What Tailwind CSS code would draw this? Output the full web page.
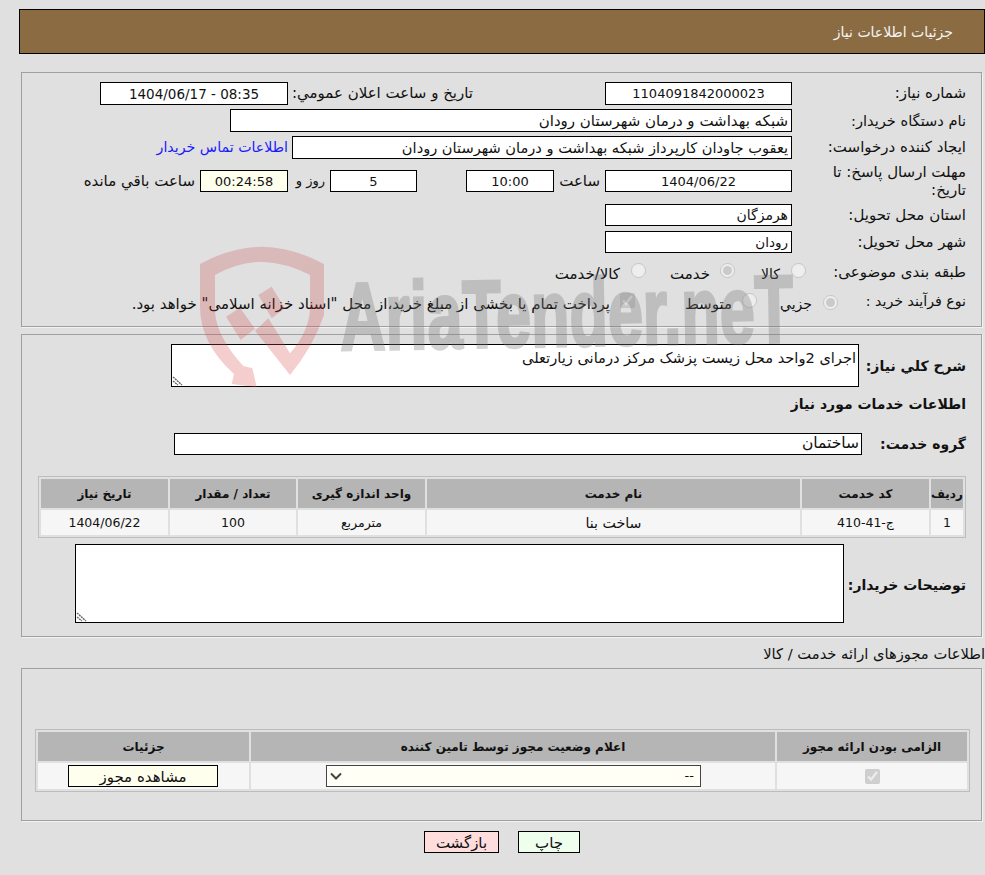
<!DOCTYPE html>
<html lang="fa" dir="rtl">
<head>
  <meta charset="UTF-8" />
  <title>جزئیات اطلاعات نیاز</title>
  <script src="https://cdn.jsdelivr.net/npm/@tailwindcss/browser@4"></script>
</head>
<body class="relative bg-[#e0e0e0] h-[875px] overflow-hidden text-[15px] text-[#111] font-['DejaVu_Sans',sans-serif]">

  <!-- Title bar -->
  <div class="pt-[9px]">
    <div class="w-[966px] h-[45px] flex items-center bg-[#8b6b42] border border-black pr-[31px] pt-[1px] text-[#f4f4f4] text-[14px]">جزئیات اطلاعات نیاز</div>
  </div>

  <!-- Main info -->
  <section class="mt-[18px] mr-[3px] w-[961px] h-[255px] border border-[#a0a0a0] shadow-[1px_1px_0_#f2f2f2] pt-[9px]">
    <div class="flex items-center h-[23px]">
      <label class="w-[189px] pr-[15px] shrink-0">شماره نياز:</label>
      <input readonly value="1104091842000023" class="w-[187px] h-[23px] bg-white border border-black text-center text-[13px]" />
      <label class="mr-[132px] w-[185px] shrink-0 whitespace-nowrap">تاریخ و ساعت اعلان عمومي:</label>
      <input readonly value="1404/06/17 - 08:35" class="w-[188px] h-[23px] bg-white border border-black text-center text-[13.5px]" dir="ltr" />
    </div>
    <div class="flex items-center h-[23px] mt-[4px]">
      <label class="w-[189px] pr-[15px] shrink-0 text-[14.6px]">نام دستگاه خریدار:</label>
      <input readonly value="شبکه بهداشت و درمان شهرستان رودان" class="w-[562px] h-[23px] bg-white border border-black px-[3px]" />
    </div>
    <div class="flex items-center h-[23px] mt-[4px]">
      <label class="w-[189px] pr-[15px] shrink-0">ایجاد کننده درخواست:</label>
      <input readonly value="یعقوب جاودان کارپرداز شبکه بهداشت و درمان شهرستان رودان" class="w-[500px] h-[23px] bg-white border border-black px-[3px] text-[14.6px]" />
      <a href="#" class="mr-[4px] text-[#1a1aff] text-[14.2px]">اطلاعات تماس خریدار</a>
    </div>
    <div class="flex items-center h-[22px] mt-[11px]">
      <label class="w-[189px] pr-[15px] shrink-0 leading-[18px]">مهلت ارسال پاسخ: تا<br />تاریخ:</label>
      <input readonly value="1404/06/22" class="w-[187px] h-[22px] bg-white border border-black text-center text-[13px]" />
      <span class="w-[51px] pr-[5px] shrink-0">ساعت</span>
      <input readonly value="10:00" class="w-[88px] h-[22px] bg-white border border-black text-center text-[13px]" />
      <input readonly value="5" class="mr-[49px] w-[87px] h-[22px] bg-white border border-black text-center text-[13px]" />
      <span class="w-[42px] pr-[5px] shrink-0 text-[13px]">روز و</span>
      <input readonly value="00:24:58" class="w-[88px] h-[22px] bg-[#ffffee] border border-black text-center text-[13px]" />
      <span class="pr-[5px] shrink-0">ساعت باقي مانده</span>
    </div>
    <div class="flex items-center h-[22px] mt-[12px]">
      <label class="w-[189px] pr-[15px] shrink-0">استان محل تحویل:</label>
      <input readonly value="هرمزگان" class="w-[187px] h-[22px] bg-white border border-black px-[3px] text-[14px]" />
    </div>
    <div class="flex items-center h-[22px] mt-[5px]">
      <label class="w-[189px] pr-[15px] shrink-0">شهر محل تحویل:</label>
      <input readonly value="رودان" class="w-[187px] h-[22px] bg-white border border-black px-[3px] text-[13.5px]" />
    </div>
    <div class="flex items-center h-[24px] mt-[7px]">
      <label class="w-[175px] pr-[15px] shrink-0">طبقه بندی موضوعی:</label>
      <input type="radio" disabled class="w-[15px] h-[15px] m-0 shrink-0 -mt-[3px]" />
      <span class="w-[56px] pr-[11px] mt-[5px] shrink-0 text-[14px]">کالا</span>
      <input type="radio" disabled checked class="w-[15px] h-[15px] m-0 shrink-0 -mt-[3px]" />
      <span class="w-[74px] pr-[10px] mt-[5px] shrink-0">خدمت</span>
      <input type="radio" disabled class="w-[15px] h-[15px] m-0 shrink-0 -mt-[3px]" />
      <span class="pr-[11px] mt-[5px] shrink-0">کالا/خدمت</span>
    </div>
    <div class="flex items-center h-[24px] mt-[6px]">
      <label class="w-[143px] pr-[15px] shrink-0 text-[14.2px]">نوع فرآیند خرید :</label>
      <input type="radio" disabled checked class="w-[15px] h-[15px] m-0 shrink-0" />
      <span class="w-[66px] pr-[11px] mt-[4px] shrink-0 text-[14px]">جزيي</span>
      <input type="radio" disabled class="w-[15px] h-[15px] m-0 shrink-0 -mt-[3px]" />
      <span class="w-[107px] pr-[10px] mt-[4px] shrink-0">متوسط</span>
      <input type="checkbox" disabled checked class="w-[15px] h-[15px] m-0 shrink-0 -mt-[3px]" />
      <span class="pr-[10px] mt-[4px] shrink-0">پرداخت تمام یا بخشی از مبلغ خرید،از محل "اسناد خزانه اسلامی" خواهد بود.</span>
    </div>
  </section>

  <!-- Description and services -->
  <section class="mt-[7px] mr-[3px] w-[961px] h-[303px] border border-[#a0a0a0] shadow-[1px_1px_0_#f2f2f2] pt-[9px] text-[14px]">
    <div class="flex items-center h-[43px]">
      <label class="w-[122px] pr-[15px] pt-[2px] shrink-0 font-bold">شرح كلي نياز:</label>
      <div class="relative w-[688px] h-[43px]">
        <textarea readonly class="block w-full h-full bg-white border border-black px-[2px] pt-[3px] leading-[20px] text-[14.6px] resize-none">اجرای 2واحد محل زیست پزشک مرکز درمانی زیارتعلی</textarea>
        <svg class="absolute left-[1px] bottom-[1px]" width="11" height="11" viewBox="0 0 11 11" fill="none" stroke="#666" stroke-width="1.4" stroke-dasharray="2 .7"><path d="M1 2 L10 10 M1 6 L6 10" /></svg>
      </div>
    </div>
    <div class="h-[22px] mt-[6px] pr-[15px] font-bold leading-[22px]">اطلاعات خدمات مورد نياز</div>
    <div class="flex items-center h-[22px] mt-[18px]">
      <label class="w-[119px] pr-[15px] shrink-0 font-bold">گروه خدمت:</label>
      <input readonly value="ساختمان" class="w-[688px] h-[22px] bg-white border border-black px-[2px] text-[15.5px]" />
    </div>
    <table class="table-fixed mt-[21px] mr-[15px] w-[928px] border border-[#bdbdbd] border-separate border-spacing-[2px] text-center text-[12.5px]">
      <thead>
        <tr class="h-[29px] bg-[#b5b5b5] text-[12px]">
          <th class="w-[32px] font-bold">ردیف</th>
          <th class="w-[127px] font-bold">کد خدمت</th>
          <th class="w-[373px] font-bold">نام خدمت</th>
          <th class="w-[127px] font-bold">واحد اندازه گیری</th>
          <th class="w-[126px] font-bold">تعداد / مقدار</th>
          <th class="font-bold">تاریخ نیاز</th>
        </tr>
      </thead>
      <tbody>
        <tr class="h-[25px] bg-[#f6f6f6]">
          <td class="pt-[2px]">1</td>
          <td class="pt-[2px]">ج-41-410</td>
          <td class="pt-[2px] text-[14.2px]">ساخت بنا</td>
          <td class="pt-[2px]">مترمربع</td>
          <td class="pt-[2px]">100</td>
          <td class="pt-[2px]">1404/06/22</td>
        </tr>
      </tbody>
    </table>
    <div class="flex items-center h-[79px] mt-[6px]">
      <label class="w-[137px] pr-[15px] pt-[3px] shrink-0 font-bold">توضیحات خریدار:</label>
      <div class="relative w-[769px] h-[79px]">
        <textarea readonly class="block w-full h-full bg-white border border-black resize-none"></textarea>
        <svg class="absolute left-[1px] bottom-[1px]" width="11" height="11" viewBox="0 0 11 11" fill="none" stroke="#666" stroke-width="1.4" stroke-dasharray="2 .7"><path d="M1 2 L10 10 M1 6 L6 10" /></svg>
      </div>
    </div>
  </section>

  <div class="h-[31px] leading-[34px] text-[14.7px]">اطلاعات مجوزهای ارائه خدمت / کالا</div>

  <!-- Licences -->
  <section class="mr-[3px] w-[961px] h-[153px] border border-[#a0a0a0] shadow-[1px_1px_0_#f2f2f2] pt-[60px]">
    <table class="table-fixed mr-[11px] w-[935px] border border-[#bdbdbd] border-separate border-spacing-[2px] text-center text-[12.5px]">
      <thead>
        <tr class="h-[29px] bg-[#b5b5b5] text-[12px]">
          <th class="w-[190px] font-bold">الزامی بودن ارائه مجوز</th>
          <th class="w-[524px] font-bold">اعلام وضعیت مجوز توسط تامین کننده</th>
          <th class="font-bold">جزئیات</th>
        </tr>
      </thead>
      <tbody>
        <tr class="h-[26px] bg-[#f6f6f6]">
          <td class="align-middle"><input type="checkbox" disabled checked class="w-[15px] h-[15px] m-0 align-middle" /></td>
          <td>
            <div class="relative mr-[74px] w-[375px] h-[22px]">
              <select class="block w-full h-full appearance-none bg-[#fffff5] border border-[#444] text-[13px] pr-[6px]"><option>--</option></select>
              <svg class="absolute left-[4px] top-[7px]" width="12" height="8" viewBox="0 0 12 8" fill="none" stroke="#444" stroke-width="2"><path d="M1 1.5 L6 6.5 L11 1.5" /></svg>
            </div>
          </td>
          <td>
            <button class="mr-[31px] block w-[150px] h-[22px] bg-[#ffffee] border border-black text-[15px]">مشاهده مجوز</button>
          </td>
        </tr>
      </tbody>
    </table>
  </section>

  <div class="flex gap-[19px] mt-[10px] mr-[405px]">
    <button class="w-[62px] h-[22px] bg-[#eeffee] border border-black text-[15px]">چاپ</button>
    <button class="w-[75px] h-[22px] bg-[#ffdddd] border border-black text-[15px]">بازگشت</button>
  </div>

  <!-- Watermark -->
  <svg class="absolute left-[190px] top-[240px] pointer-events-none" width="300" height="147" viewBox="0 0 900 441" fill-rule="evenodd">
    <defs>
      <linearGradient id="wm" x1="0" y1="0" x2="0" y2="1">
        <stop offset="0" stop-color="rgb(190,40,40)" stop-opacity=".21" />
        <stop offset="1" stop-color="rgb(225,90,90)" stop-opacity=".3" />
      </linearGradient>
    </defs>
    <path fill="url(#wm)" d="M30 72 Q120 22 215 20 Q310 22 402 72 L402 225 Q370 320 300 405 L195 272 L235 235 L300 340 Q360 270 360 200 L360 105 Q290 68 215 65 Q140 68 75 105 L75 215 Q80 290 160 378 L187 385 L200 441 L125 432 L132 402 Q30 310 30 200 Z" />
    <path fill="url(#wm)" d="M108 230 L150 203 L195 266 L152 300 Z M205 165 L245 140 L285 205 L245 235 Z" />
  </svg>
  <div class="absolute left-[340px] top-[269px] pointer-events-none origin-left [transform:rotate(-1deg)_scaleX(.655)] whitespace-nowrap font-['Liberation_Sans',sans-serif] font-bold text-[96px] leading-[96px] text-[#787878] opacity-[.32] [-webkit-text-stroke:3px_#787878]" dir="ltr">AriaTender.neT</div>
</body>
</html>
